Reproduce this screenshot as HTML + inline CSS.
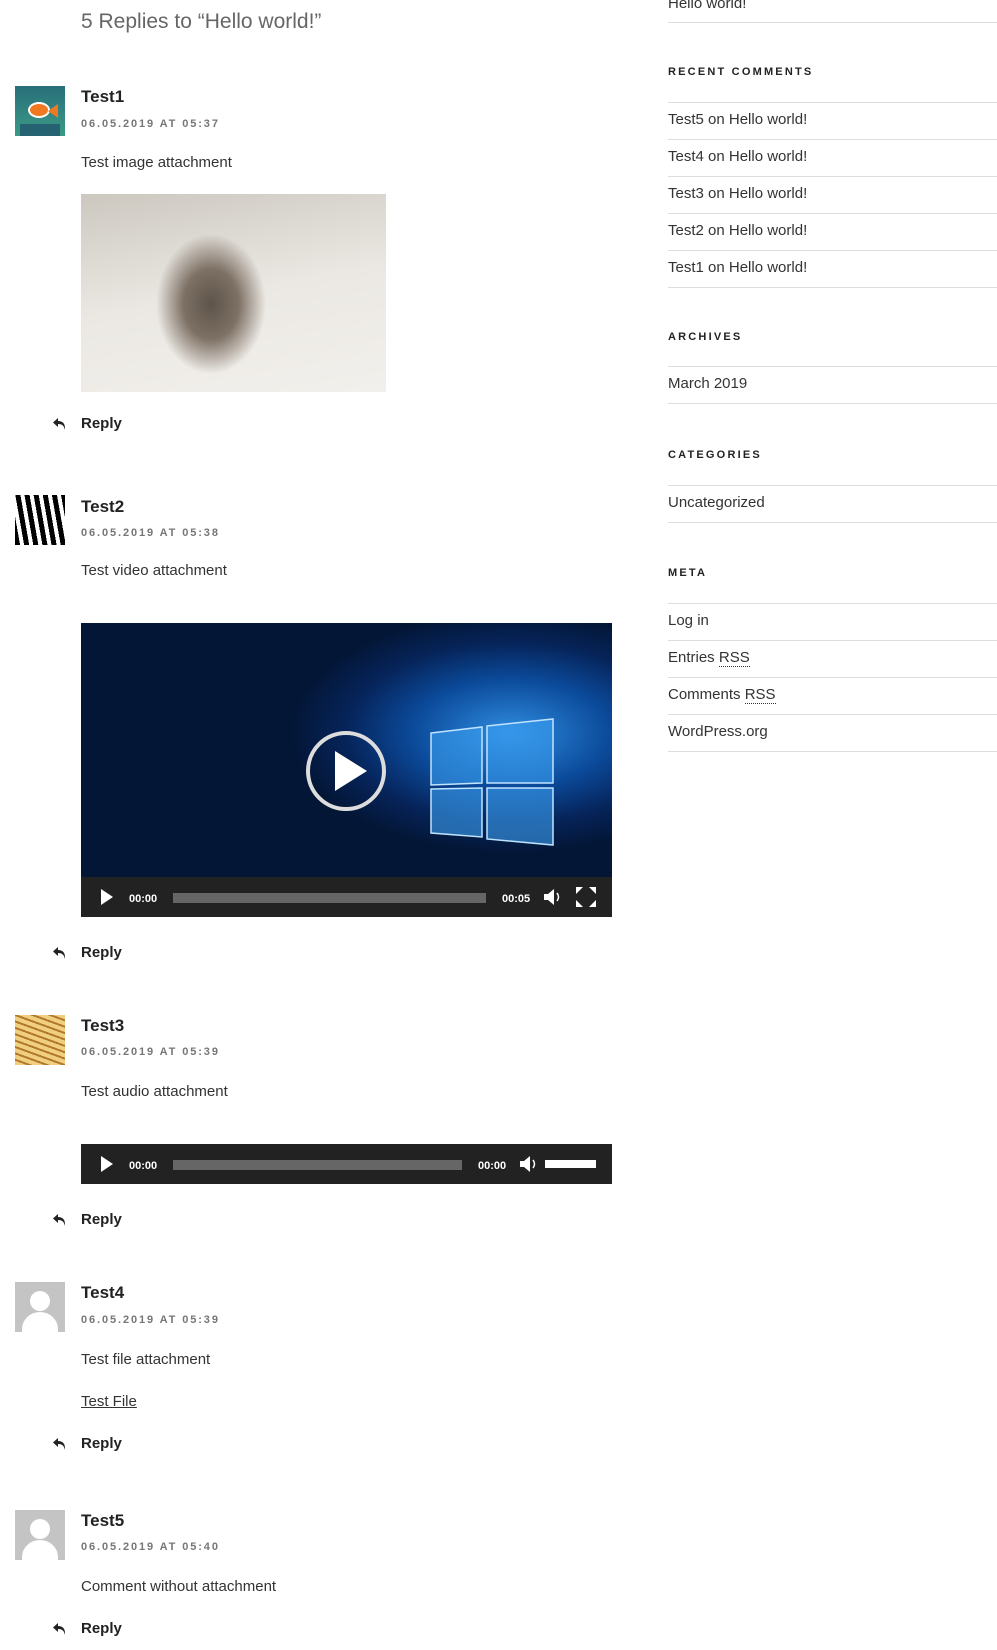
<!DOCTYPE html>
<html><head><meta charset="utf-8"><style>
*{margin:0;padding:0;box-sizing:border-box}
body{width:997px;height:1650px;background:#fff;position:relative;overflow:hidden;font-family:"Liberation Sans",sans-serif;color:#333}
.a{position:absolute;white-space:nowrap}
.t{font-size:15px;color:#333;line-height:20px}
.n{font-size:17px;font-weight:bold;color:#222;line-height:20px}
.d{font-size:11px;font-weight:bold;color:#767676;letter-spacing:1.9px;line-height:14px}
.r{font-size:15px;font-weight:bold;color:#222;line-height:20px}
.h{font-size:11px;font-weight:bold;color:#222;letter-spacing:2.2px;line-height:14px}
.ln{position:absolute;left:668px;width:330px;height:1px;background:#ddd}
.av{position:absolute;left:15px;width:50px;height:50px}
.gav{background:#c4c4c4;overflow:hidden}
.gav:before{content:"";position:absolute;left:15px;top:9px;width:20px;height:20px;border-radius:50%;background:#fff}
.gav:after{content:"";position:absolute;left:7px;top:30px;width:36px;height:34px;border-radius:50% 50% 0 0;background:#fff}
.bar{position:absolute;left:81px;width:531px;height:40px;background:#222}
</style></head><body>

<div class="a" style="left:81px;top:10px;font-size:21px;color:#666;line-height:24px">5 Replies to “Hello world!”</div>

<!-- sidebar -->
<div class="a t" style="left:668px;top:-6px">Hello world!</div>
<div class="ln" style="top:22px"></div>
<div class="a h" style="left:668px;top:65px">RECENT COMMENTS</div>
<div class="ln" style="top:102px"></div>
<div class="a t" style="left:668px;top:110px">Test5 on Hello world!</div>
<div class="ln" style="top:139px"></div>
<div class="a t" style="left:668px;top:147px">Test4 on Hello world!</div>
<div class="ln" style="top:176px"></div>
<div class="a t" style="left:668px;top:184px">Test3 on Hello world!</div>
<div class="ln" style="top:213px"></div>
<div class="a t" style="left:668px;top:221px">Test2 on Hello world!</div>
<div class="ln" style="top:250px"></div>
<div class="a t" style="left:668px;top:258px">Test1 on Hello world!</div>
<div class="ln" style="top:287px"></div>
<div class="a h" style="left:668px;top:330px">ARCHIVES</div>
<div class="ln" style="top:366px"></div>
<div class="a t" style="left:668px;top:374px">March 2019</div>
<div class="ln" style="top:403px"></div>
<div class="a h" style="left:668px;top:448px">CATEGORIES</div>
<div class="ln" style="top:485px"></div>
<div class="a t" style="left:668px;top:493px">Uncategorized</div>
<div class="ln" style="top:522px"></div>
<div class="a h" style="left:668px;top:566px">META</div>
<div class="ln" style="top:603px"></div>
<div class="a t" style="left:668px;top:611px">Log in</div>
<div class="ln" style="top:640px"></div>
<div class="a t" style="left:668px;top:648px">Entries <span style="border-bottom:1px dotted #333">RSS</span></div>
<div class="ln" style="top:677px"></div>
<div class="a t" style="left:668px;top:685px">Comments <span style="border-bottom:1px dotted #333">RSS</span></div>
<div class="ln" style="top:714px"></div>
<div class="a t" style="left:668px;top:722px">WordPress.org</div>
<div class="ln" style="top:751px"></div>

<!-- Test1 -->
<div class="av" style="top:86px;background:linear-gradient(#2a6f7a,#3a9a86);overflow:hidden">
<div style="position:absolute;left:13px;top:16px;width:22px;height:16px;border-radius:50%;background:#f07820;border:2px solid #fff"></div>
<div style="position:absolute;left:33px;top:18px;width:0;height:0;border-top:7px solid transparent;border-bottom:7px solid transparent;border-right:10px solid #f07820"></div>
<div style="position:absolute;left:5px;top:38px;width:40px;height:12px;background:#1e4d6a;opacity:.7"></div></div>
<div class="a n" style="left:81px;top:87px">Test1</div>
<div class="a d" style="left:81px;top:117px">06.05.2019 AT 05:37</div>
<div class="a t" style="left:81px;top:153px">Test image attachment</div>
<div class="a" style="left:81px;top:194px;width:305px;height:198px;background:radial-gradient(ellipse 55px 70px at 130px 110px,#5e544a 0%,#7d7064 50%,rgba(220,215,208,0) 100%),linear-gradient(170deg,#ccc8c0,#ebe8e3 50%,#f2f0ec)"></div>
<svg class="a" style="left:52px;top:416px" width="16" height="16" viewBox="0 0 16 16"><path d="M6 2 L1 6.5 L6 11 V8 C10 8 12 9.5 13 14 C13.5 8 11 5 6 5 Z" fill="#222"/></svg>
<div class="a r" style="left:81px;top:414px">Reply</div>

<!-- Test2 -->
<div class="av" style="top:495px;background:repeating-linear-gradient(80deg,#000 0 5px,#fff 5px 9px)"></div>
<div class="a n" style="left:81px;top:497px">Test2</div>
<div class="a d" style="left:81px;top:526px">06.05.2019 AT 05:38</div>
<div class="a t" style="left:81px;top:561px">Test video attachment</div>
<div class="a" style="left:81px;top:623px;width:531px;height:254px;background:radial-gradient(ellipse 220px 120px at 430px 110px,#2f8ce0 0%,#0b4a9a 45%,#06245a 75%,#031636 100%)">
<svg width="531" height="254" style="position:absolute;left:0;top:0"><g stroke="#bfe4ff" stroke-width="1.5" fill="#3a9ef0" fill-opacity=".6"><polygon points="350,110 401,104 401,160 350,162"/><polygon points="406,103 472,96 472,160 406,160"/><polygon points="350,166 401,165 401,214 350,210"/><polygon points="406,165 472,165 472,222 406,216"/></g>
<circle cx="265" cy="148" r="38" fill="none" stroke="#ddd" stroke-width="4"/><polygon points="254,128 254,168 286,148" fill="#fff"/></svg></div>
<div class="bar" style="top:877px"></div>
<svg class="a" style="left:100px;top:888px" width="14" height="18"><polygon points="1,1 1,17 13,9" fill="#fff"/></svg>
<div class="a" style="left:129px;top:893px;font-size:11px;color:#fff;font-weight:bold;line-height:12px">00:00</div>
<div class="a" style="left:173px;top:893px;width:313px;height:10px;background:#666"></div>
<div class="a" style="left:502px;top:893px;font-size:11px;color:#fff;font-weight:bold;line-height:12px">00:05</div>
<svg class="a" style="left:543px;top:888px" width="20" height="18"><polygon points="1,6 5,6 11,1 11,17 5,12 1,12" fill="#fff"/><path d="M14 5 Q17 9 14 13" stroke="#fff" stroke-width="1.5" fill="none"/></svg>
<svg class="a" style="left:576px;top:887px" width="20" height="20" fill="#fff"><polygon points="0,0 7,0 0,7"/><polygon points="20,0 13,0 20,7"/><polygon points="0,20 7,20 0,13"/><polygon points="20,20 13,20 20,13"/></svg>
<svg class="a" style="left:52px;top:945px" width="16" height="16" viewBox="0 0 16 16"><path d="M6 2 L1 6.5 L6 11 V8 C10 8 12 9.5 13 14 C13.5 8 11 5 6 5 Z" fill="#222"/></svg>
<div class="a r" style="left:81px;top:943px">Reply</div>

<!-- Test3 -->
<div class="av" style="top:1015px;background:repeating-linear-gradient(20deg,#f0d080 0 4px,#b07a2a 4px 6px)"></div>
<div class="a n" style="left:81px;top:1016px">Test3</div>
<div class="a d" style="left:81px;top:1045px">06.05.2019 AT 05:39</div>
<div class="a t" style="left:81px;top:1082px">Test audio attachment</div>
<div class="bar" style="top:1144px"></div>
<svg class="a" style="left:100px;top:1155px" width="14" height="18"><polygon points="1,1 1,17 13,9" fill="#fff"/></svg>
<div class="a" style="left:129px;top:1160px;font-size:11px;color:#fff;font-weight:bold;line-height:12px">00:00</div>
<div class="a" style="left:173px;top:1160px;width:289px;height:10px;background:#666"></div>
<div class="a" style="left:478px;top:1160px;font-size:11px;color:#fff;font-weight:bold;line-height:12px">00:00</div>
<svg class="a" style="left:519px;top:1155px" width="20" height="18"><polygon points="1,6 5,6 11,1 11,17 5,12 1,12" fill="#fff"/><path d="M14 5 Q17 9 14 13" stroke="#fff" stroke-width="1.5" fill="none"/></svg>
<div class="a" style="left:545px;top:1160px;width:51px;height:8px;background:#fff"></div>
<svg class="a" style="left:52px;top:1212px" width="16" height="16" viewBox="0 0 16 16"><path d="M6 2 L1 6.5 L6 11 V8 C10 8 12 9.5 13 14 C13.5 8 11 5 6 5 Z" fill="#222"/></svg>
<div class="a r" style="left:81px;top:1210px">Reply</div>

<!-- Test4 -->
<div class="av gav" style="top:1282px"></div>
<div class="a n" style="left:81px;top:1283px">Test4</div>
<div class="a d" style="left:81px;top:1313px">06.05.2019 AT 05:39</div>
<div class="a t" style="left:81px;top:1350px">Test file attachment</div>
<div class="a t" style="left:81px;top:1392px;text-decoration:underline">Test File</div>
<svg class="a" style="left:52px;top:1436px" width="16" height="16" viewBox="0 0 16 16"><path d="M6 2 L1 6.5 L6 11 V8 C10 8 12 9.5 13 14 C13.5 8 11 5 6 5 Z" fill="#222"/></svg>
<div class="a r" style="left:81px;top:1434px">Reply</div>

<!-- Test5 -->
<div class="av gav" style="top:1510px"></div>
<div class="a n" style="left:81px;top:1511px">Test5</div>
<div class="a d" style="left:81px;top:1540px">06.05.2019 AT 05:40</div>
<div class="a t" style="left:81px;top:1577px">Comment without attachment</div>
<svg class="a" style="left:52px;top:1621px" width="16" height="16" viewBox="0 0 16 16"><path d="M6 2 L1 6.5 L6 11 V8 C10 8 12 9.5 13 14 C13.5 8 11 5 6 5 Z" fill="#222"/></svg>
<div class="a r" style="left:81px;top:1619px">Reply</div>
</body></html>
